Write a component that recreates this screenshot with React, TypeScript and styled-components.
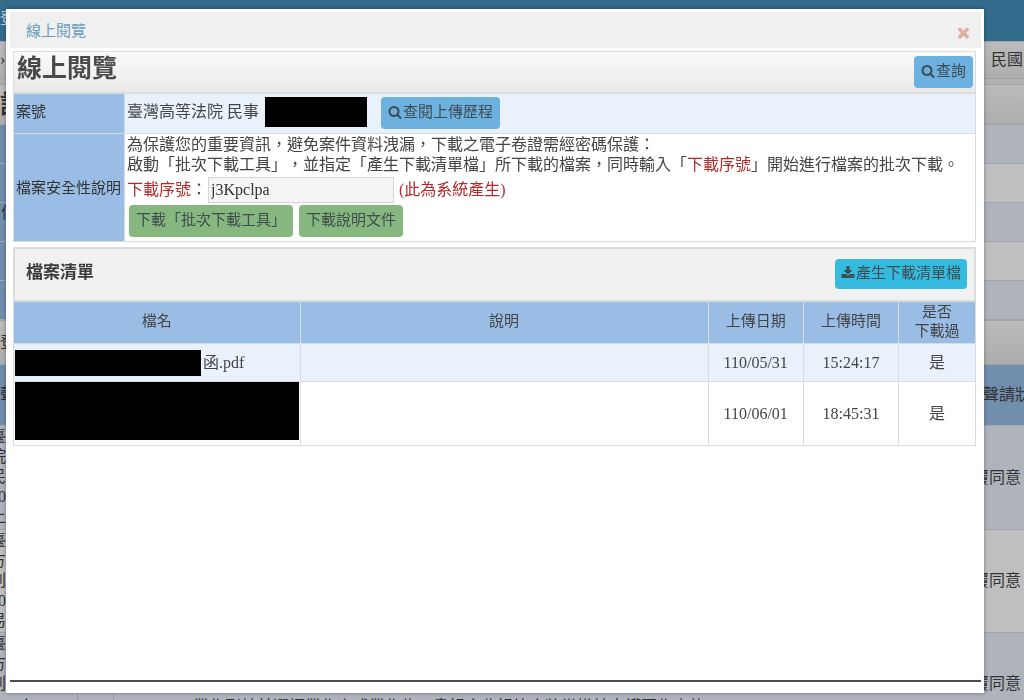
import React from 'react';
import styled, { createGlobalStyle, css } from 'styled-components';

const GlobalStyle = createGlobalStyle`
  * { box-sizing: border-box; }
  body {
    margin: 0;
    overflow: hidden;
    color: #444;
    background: #b0b0b0;
    font-family: "Liberation Serif", "Noto Sans CJK TC", serif;
    font-size: 16px;
    line-height: 20px;
    text-spacing-trim: space-all;
  }
  button, input { font: inherit; color: inherit; }
`;

/* ---------- page behind the dialog ---------- */

const Page = styled.div`
  height: 100vh;
  overflow: hidden;
  display: flex;
  flex-direction: column;
  color: #333;
`;

const Banner = styled.header`
  flex: none;
  height: 41px;
  padding-top: 9px;
  background: #326b8c;
  color: #c4d2dc;
`;

const Strip = styled.div<{ $height: number; $gap?: number }>`
  flex: none;
  height: ${(p) => p.$height}px;
  margin-bottom: ${(p) => p.$gap ?? 0}px;
  display: flex;
  align-items: center;
  justify-content: space-between;
  border: 1px solid #a3a3a3;
  border-width: 1px 0;
  background: linear-gradient(#bbb, #adadad);
  overflow: hidden;
`;

const StripTitle = styled.h2`
  margin: 0;
  font-size: 25px;
  line-height: 32px;
`;

const EdgeText = styled.span<{ $width: number }>`
  flex: none;
  width: ${(p) => p.$width}px;
  white-space: nowrap;
  overflow: hidden;
`;

const BackRow = styled.div<{ $height: number; $tone: 'cool' | 'plain' | 'head' }>`
  flex: none;
  height: ${(p) => p.$height}px;
  display: flex;
  align-items: center;
  justify-content: space-between;
  overflow: hidden;
  border-bottom: 1px solid #a3a6ab;
  background: ${(p) => ({ cool: '#afb3bc', plain: '#bfbfbf', head: '#728eae' })[p.$tone]};
`;

const BackLabel = styled.div`
  align-self: stretch;
  width: 120px;
  padding: 0 1px;
  background: #728eae;
`;

const BackLines = styled.div`
  align-self: flex-start;
  width: 20px;
  margin-left: -10px;
  padding-top: 1px;
  white-space: pre-line;
`;

const BackCell = styled.div<{ $width: number }>`
  flex: none;
  align-self: stretch;
  width: ${(p) => p.$width}px;
  padding: 64px 0 0 8px;
  border-right: 1px solid #989ca3;
`;

const BackNote = styled.div`
  align-self: flex-start;
  flex: 1;
  padding: 64px 0 0 79px;
  white-space: nowrap;
`;

/* ---------- dialog ---------- */

const Dialog = styled.div`
  position: fixed;
  inset: 9px 40px 7px 6px;
  display: flex;
  flex-direction: column;
  padding: 3px 3px 11px 4px;
  background: #fff;
  box-shadow: 0 0 4px rgba(0, 0, 0, 0.35);
`;

const DialogHeader = styled.div`
  flex: none;
  height: 36px;
  display: flex;
  align-items: center;
  justify-content: space-between;
  padding: 2px 9px 0 16px;
  background: #f0f0f0;
  color: #6a9fbd;
  font-size: 15px;
`;

const CloseButton = styled.button`
  display: flex;
  padding: 3px 0 0;
  border: 0;
  background: none;
  color: #dfb0a8;
`;

const DialogBody = styled.main`
  flex: 1;
  min-height: 0;
  overflow: hidden;
  padding: 3px 5px 0 3px;
  border-bottom: 2px solid #4c4c4c;
`;

const TitleBar = styled.div`
  height: 42px;
  display: flex;
  align-items: center;
  justify-content: space-between;
  padding: 0 2px 0 3px;
  border: 1px solid #ddd;
  background: linear-gradient(#fafafa, #e9e9e9);
`;

const Title = styled.h1`
  margin: 0;
  padding-bottom: 6px;
  font-size: 25px;
  line-height: 32px;
  color: #4a4a4a;
`;

const tones = {
  blue: '#6cb1df',
  green: '#86b77e',
  cyan: '#34bbdf',
};

const Button = styled.button<{ $tone: keyof typeof tones }>`
  height: ${(p) => (p.$tone === 'cyan' ? 30 : 32)}px;
  display: inline-flex;
  align-items: center;
  gap: 1px;
  padding: 0 ${(p) => (p.$tone === 'cyan' ? 6 : 7)}px 2px;
  border: 0;
  border-radius: 4px;
  background: ${(p) => tones[p.$tone]};
  color: #3f4c50;
  font-size: 15px;
  white-space: nowrap;
`;

const cellLine = css`
  border: 1px solid #d9dcdf;
`;

const InfoTable = styled.table`
  width: 100%;
  border-collapse: collapse;
  margin-bottom: 5px;

  th {
    ${cellLine}
    width: 111px;
    padding: 0 2px;
    background: #99bde5;
    color: #333;
    font-size: 15px;
    font-weight: 400;
    text-align: left;
    white-space: nowrap;
  }
  td {
    ${cellLine}
    padding: 0 2px;
  }
  tr:first-child { height: 40px; }
  tr:first-child th { padding-bottom: 4px; }
  tr:first-child td {
    padding-bottom: 2px;
    background: #e9f1fb;
  }
  tr:last-child { height: 108px; }
  tr:last-child td { padding-bottom: 4px; }
`;

const CaseLine = styled.div`
  display: flex;
  align-items: center;
`;

const CaseName = styled.span`
  width: 138px;
  padding-bottom: 2px;
  white-space: nowrap;
`;

const Redacted = styled.span<{ $width: number; $height: number }>`
  flex: none;
  width: ${(p) => p.$width}px;
  height: ${(p) => p.$height}px;
  background: #000;
`;

const CaseMask = styled(Redacted)`
  margin: 0 14px 2px 0;
`;

const Notice = styled.p`
  margin: 0;
`;

const Alert = styled.span`
  color: #b52b2b;
`;

const SerialLine = styled.div`
  display: flex;
  align-items: center;
  height: 30px;
`;

const SerialInput = styled.input`
  width: 186px;
  height: 26px;
  margin: 0 5px 0 1px;
  padding: 0 2px;
  border: 1px solid #d5d5d5;
  background: #f5f5f5;
  color: #333;
`;

const Actions = styled.div`
  display: flex;
  gap: 6px;
  padding-left: 2px;
`;

const ListHeader = styled.div`
  height: 54px;
  display: flex;
  align-items: center;
  justify-content: space-between;
  padding: 0 7px 2px 11px;
  border: 2px solid #dadcde;
  border-bottom-width: 1px;
  background: #f1f1f1;
`;

const ListTitle = styled.h2`
  margin: 0;
  padding-bottom: 2px;
  font-size: 17px;
  line-height: 24px;
  color: #3c3c3c;
`;

const FileTable = styled.table`
  width: 100%;
  table-layout: fixed;
  border-collapse: collapse;
  text-align: center;

  th, td {
    ${cellLine}
    padding: 0;
  }
  th {
    height: 42px;
    padding-bottom: 2px;
    background: #99bde5;
    color: #444;
    font-size: 15px;
    font-weight: 400;
    line-height: 19px;
  }
  td { height: 38px; }
  tbody tr:first-child td { background: #e9f1fb; }
  tbody tr:last-child td { height: 64px; }
  tbody tr:last-child td:first-child { padding-bottom: 5px; }
`;

const FileName = styled.div`
  display: flex;
  align-items: center;
  gap: 2px;
  padding-left: 1px;
`;

const SearchIcon = () => (
  <svg width="14" height="14" viewBox="0 0 1664 1792" fill="currentColor" aria-hidden="true">
    <path d="M1152 832q0-185-131.500-316.500t-316.500-131.500-316.500 131.500-131.500 316.500 131.500 316.500 316.500 131.500 316.500-131.500 131.500-316.500zm512 832q0 52-38 90t-90 38q-54 0-90-38l-343-342q-179 124-399 124-143 0-273.500-55.500t-225-150-150-225-55.500-273.500 55.500-273.500 150-225 225-150 273.500-55.500 273.500 55.500 225 150 150 225 55.500 273.500q0 220-124 399l343 343q37 37 37 90z" />
  </svg>
);

const DownloadIcon = () => (
  <svg width="14" height="14" viewBox="0 0 1792 1792" fill="currentColor" aria-hidden="true">
    <path d="M1344 1344q0-26-19-45t-45-19-45 19-19 45 19 45 45 19 45-19 19-45zm256 0q0-26-19-45t-45-19-45 19-19 45 19 45 45 19 45-19 19-45zm128-224v320q0 40-28 68t-68 28h-1472q-40 0-68-28t-28-68v-320q0-40 28-68t68-28h465l135 136q58 56 136 56t136-56l136-136h464q40 0 68 28t28 68zm-325-569q17 41-14 70l-448 448q-18 19-45 19t-45-19l-448-448q-31-29-14-70 17-39 59-39h256v-448q0-26 19-45t45-19h256q26 0 45 19t19 45v448h256q42 0 59 39z" />
  </svg>
);

const CloseIcon = () => (
  <svg width="17" height="17" viewBox="0 0 1792 1792" fill="currentColor" aria-hidden="true">
    <path d="M1490 1322q0 40-28 68l-136 136q-28 28-68 28t-68-28l-294-294-294 294q-28 28-68 28t-68-28l-136-136q-28-28-28-68t28-68l294-294-294-294q-28-28-28-68t28-68l136-136q28-28 68-28t68 28l294 294 294-294q28-28 68-28t68 28l136 136q28 28 28 68t-28 68l-294 294 294 294q28 28 28 68z" />
  </svg>
);

const formTones = ['cool', 'plain', 'cool', 'plain', 'cool'] as const;

export default function App() {
  return (
    <>
      <GlobalStyle />
      <Page aria-hidden="true">
        <Banner>登</Banner>
        <Strip $height={38} $gap={5}>
          <span>›</span>
          <EdgeText $width={33}>民國</EdgeText>
        </Strip>
        <Strip $height={41}>
          <StripTitle>訴</StripTitle>
        </Strip>
        {formTones.map((tone, i) => (
          <BackRow key={i} $height={39} $tone={tone}>
            <BackLabel>{i === 2 ? '件' : ''}</BackLabel>
          </BackRow>
        ))}
        <Strip $height={45}>
          <span>登</span>
        </Strip>
        <BackRow $height={61} $tone="head">
          <span>聲</span>
          <EdgeText $width={41}>聲請狀</EdgeText>
        </BackRow>
        <BackRow $height={104} $tone="cool">
          <BackLines>{'臺\n院\n民\n10\n上'}</BackLines>
          <EdgeText $width={51}>覆同意</EdgeText>
        </BackRow>
        <BackRow $height={103} $tone="plain">
          <BackLines>{'臺\n方\n刑\n10\n易'}</BackLines>
          <EdgeText $width={51}>覆同意</EdgeText>
        </BackRow>
        <BackRow $height={103} $tone="cool">
          <BackLines>{'臺\n方\n刑'}</BackLines>
          <BackCell $width={68}>合</BackCell>
          <BackCell $width={36} />
          <BackNote>業作到於其選擇業作之或業作佐，書記官收記符合將當掛於走護要作事故</BackNote>
          <EdgeText $width={51}>覆同意</EdgeText>
        </BackRow>
      </Page>

      <Dialog role="dialog" aria-labelledby="dialog-title">
        <DialogHeader>
          <span id="dialog-title">線上閱覽</span>
          <CloseButton type="button" aria-label="關閉">
            <CloseIcon />
          </CloseButton>
        </DialogHeader>

        <DialogBody>
          <TitleBar>
            <Title>線上閱覽</Title>
            <Button type="button" $tone="blue">
              <SearchIcon />
              查詢
            </Button>
          </TitleBar>

          <InfoTable>
            <tbody>
              <tr>
                <th scope="row">案號</th>
                <td>
                  <CaseLine>
                    <CaseName>臺灣高等法院 民事</CaseName>
                    <CaseMask $width={102} $height={30} />
                    <Button type="button" $tone="blue">
                      <SearchIcon />
                      查閱上傳歷程
                    </Button>
                  </CaseLine>
                </td>
              </tr>
              <tr>
                <th scope="row">檔案安全性說明</th>
                <td>
                  <Notice>
                    為保護您的重要資訊，避免案件資料洩漏，下載之電子卷證需經密碼保護：
                    <br />
                    啟動「批次下載工具」，並指定「產生下載清單檔」所下載的檔案，同時輸入「<Alert>下載序號</Alert>」開始進行檔案的批次下載。
                  </Notice>
                  <SerialLine>
                    <label htmlFor="serial">
                      <Alert>下載序號</Alert>：
                    </label>
                    <SerialInput id="serial" type="text" readOnly value="j3Kpclpa" />
                    <Alert>(此為系統產生)</Alert>
                  </SerialLine>
                  <Actions>
                    <Button type="button" $tone="green">下載「批次下載工具」</Button>
                    <Button type="button" $tone="green">下載說明文件</Button>
                  </Actions>
                </td>
              </tr>
            </tbody>
          </InfoTable>

          <ListHeader>
            <ListTitle>檔案清單</ListTitle>
            <Button type="button" $tone="cyan">
              <DownloadIcon />
              產生下載清單檔
            </Button>
          </ListHeader>
          <FileTable>
            <colgroup>
              <col style={{ width: '29.8%' }} />
              <col />
              <col style={{ width: '9.9%' }} />
              <col style={{ width: '9.9%' }} />
              <col style={{ width: '8%' }} />
            </colgroup>
            <thead>
              <tr>
                <th scope="col">檔名</th>
                <th scope="col">說明</th>
                <th scope="col">上傳日期</th>
                <th scope="col">上傳時間</th>
                <th scope="col">
                  是否
                  <br />
                  下載過
                </th>
              </tr>
            </thead>
            <tbody>
              <tr>
                <td>
                  <FileName>
                    <Redacted $width={186} $height={26} />
                    函.pdf
                  </FileName>
                </td>
                <td />
                <td>110/05/31</td>
                <td>15:24:17</td>
                <td>是</td>
              </tr>
              <tr>
                <td>
                  <FileName>
                    <Redacted $width={284} $height={58} />
                  </FileName>
                </td>
                <td />
                <td>110/06/01</td>
                <td>18:45:31</td>
                <td>是</td>
              </tr>
            </tbody>
          </FileTable>
        </DialogBody>
      </Dialog>
    </>
  );
}
